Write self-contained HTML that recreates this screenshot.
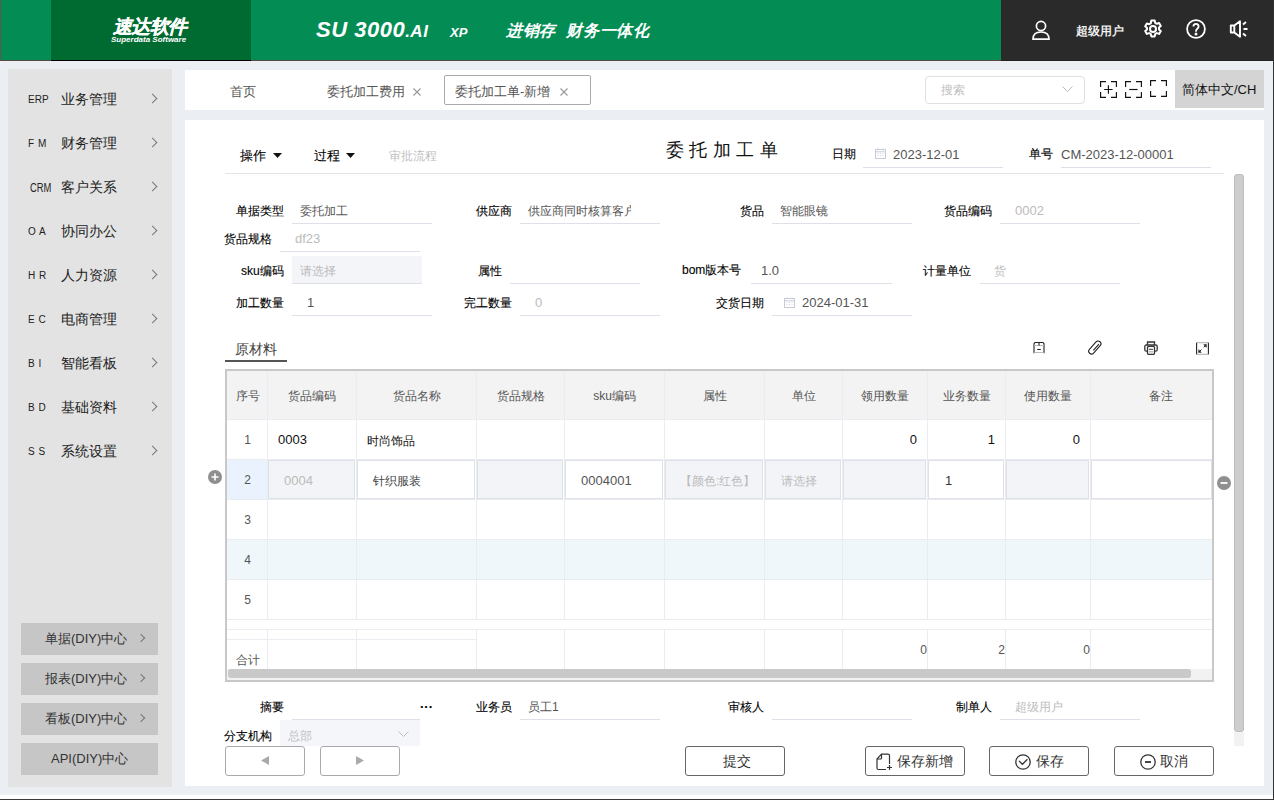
<!DOCTYPE html>
<html><head><meta charset="utf-8">
<style>
*{box-sizing:border-box;margin:0;padding:0}
html,body{width:1274px;height:800px;overflow:hidden}
body{position:relative;background:#ebeef2;font-family:"Liberation Sans",sans-serif;color:#333;font-size:12px}
.a{position:absolute;white-space:nowrap}
#hdr{position:absolute;left:0;top:0;width:1274px;height:61px;background:#038d55;border-bottom:1px solid #5a4848}
#logo{position:absolute;left:51px;top:0;width:200px;height:61px;background:#006b31;border-bottom:1px solid #000}
#hdr-r{position:absolute;left:1001px;top:0;width:273px;height:61px;background:#2a2a2a;border-bottom:1px solid #222}
#side{position:absolute;left:8px;top:69px;width:164px;height:718px;background:#e3e3e3}
.mi{position:absolute;left:0;width:164px;height:44px}
.mi .ab{position:absolute;left:20px;top:0;font-size:10px;color:#222;letter-spacing:1px}
.mi .nm{position:absolute;left:53px;top:1px;font-size:14px;color:#222}
.chev{position:absolute;width:7px;height:7px;border-right:1px solid #777;border-top:1px solid #777;transform:rotate(45deg)}
.sb{position:absolute;left:13px;width:137px;height:32px;background:#c6c6c6;font-size:13px;color:#333}
#tabs{position:absolute;left:185px;top:70px;width:1079px;height:40px;background:#fff}
#panel{position:absolute;left:185px;top:120px;width:1079px;height:666px;background:#fff}
</style></head><body>
<div id="hdr">
  <div id="logo">
    <div class="a" style="left:62px;top:17px;font-size:19px;line-height:1;font-weight:bold;font-style:italic;color:#fff;letter-spacing:-0.6px;-webkit-text-stroke:0.2px #fff">速达软件</div>
    <div class="a" style="left:60px;top:35px;font-size:8px;font-weight:bold;font-style:italic;color:#fff;letter-spacing:0px">Superdata Software</div>
  </div>
  <div class="a" style="left:316px;top:17px;font-size:22px;font-weight:bold;font-style:italic;color:#fff;letter-spacing:0.5px">SU 3000<span style="font-size:17px">.AI</span></div>
  <div class="a" style="left:450px;top:25px;font-size:13px;font-weight:bold;font-style:italic;color:#fff">XP</div>
  <div class="a" style="left:506px;top:21px;font-size:16px;font-weight:bold;font-style:italic;color:#fff;letter-spacing:0.6px">进销存</div>
  <div class="a" style="left:566px;top:21px;font-size:16px;font-weight:bold;font-style:italic;color:#fff;letter-spacing:0.8px">财务一体化</div>
  <div id="hdr-r">
    <svg class="a" style="left:31px;top:20px" width="18" height="20" viewBox="0 0 18 20" fill="none" stroke="#fff" stroke-width="1.7"><circle cx="9" cy="6" r="4.6"/><path d="M1 19.2 C1 14 4.5 12 9 12 C13.5 12 17 14 17 19.2 Z"/></svg>
    <div class="a" style="left:75px;top:23px;font-size:12px;color:#fff;-webkit-text-stroke:0.3px #fff">超级用户</div>
    <svg class="a" style="left:142px;top:19px" width="20" height="20" viewBox="0 0 20 20" fill="none" stroke="#fff" stroke-width="2"><path d="M8.3 1.5h3.4l.5 2.4 1.6.9 2.3-.8 1.7 2.9-1.8 1.6v1.9l1.8 1.6-1.7 2.9-2.3-.8-1.6.9-.5 2.4H8.3l-.5-2.4-1.6-.9-2.3.8-1.7-2.9 1.8-1.6V8.9L2.2 7.3l1.7-2.9 2.3.8 1.6-.9z" stroke-linejoin="round"/><circle cx="10" cy="10" r="3"/></svg>
    <svg class="a" style="left:185px;top:19px" width="20" height="20" viewBox="0 0 20 20" fill="none" stroke="#fff" stroke-width="1.8"><circle cx="10" cy="10" r="8.9"/><path d="M7.4 7.6C7.4 5.9 8.5 4.9 10 4.9s2.6 1 2.6 2.6c0 2.2-2.6 2.3-2.6 4.5v.7"/><circle cx="10" cy="15" r=".6" fill="#fff"/></svg>
    <svg class="a" style="left:228px;top:20px" width="20" height="18" viewBox="0 0 20 18" fill="none" stroke="#fff" stroke-width="1.9"><path d="M1.8 5.5h3.5L11 1.2v15.6L5.3 12.5H1.8z" stroke-linejoin="round"/><path d="M5.3 5.5v7"/><path d="M14 4.5l3-2.5M14.5 9h4M14 13.5l3 2.5"/></svg>
  </div>
</div>
<div id="side">
  <div class="mi" style="top:21px"><div class="ab" style="top:4px;letter-spacing:0">ERP</div><div class="nm">业务管理</div><div class="chev" style="left:141px;top:5px"></div></div>
  <div class="mi" style="top:65px"><div class="ab" style="top:4px;letter-spacing:0.5px">F M</div><div class="nm">财务管理</div><div class="chev" style="left:141px;top:5px"></div></div>
  <div class="mi" style="top:109px"><div class="ab" style="top:4px;letter-spacing:0;font-size:12px;left:22px;top:3px;transform:scaleX(0.78);transform-origin:0 0">CRM</div><div class="nm">客户关系</div><div class="chev" style="left:141px;top:5px"></div></div>
  <div class="mi" style="top:153px"><div class="ab" style="top:4px;letter-spacing:0.5px">O A</div><div class="nm">协同办公</div><div class="chev" style="left:141px;top:5px"></div></div>
  <div class="mi" style="top:197px"><div class="ab" style="top:4px;letter-spacing:0.5px">H R</div><div class="nm">人力资源</div><div class="chev" style="left:141px;top:5px"></div></div>
  <div class="mi" style="top:241px"><div class="ab" style="top:4px;letter-spacing:0.5px">E C</div><div class="nm">电商管理</div><div class="chev" style="left:141px;top:5px"></div></div>
  <div class="mi" style="top:285px"><div class="ab" style="top:4px;letter-spacing:0.5px">B I</div><div class="nm">智能看板</div><div class="chev" style="left:141px;top:5px"></div></div>
  <div class="mi" style="top:329px"><div class="ab" style="top:4px;letter-spacing:0.5px">B D</div><div class="nm">基础资料</div><div class="chev" style="left:141px;top:5px"></div></div>
  <div class="mi" style="top:373px"><div class="ab" style="top:4px;letter-spacing:0.5px">S S</div><div class="nm">系统设置</div><div class="chev" style="left:141px;top:5px"></div></div>
  <div class="sb" style="top:554px"><div class="a" style="left:24px;top:7px">单据(DIY)中心</div><div class="chev" style="left:117px;top:12px;width:6px;height:6px"></div></div>
  <div class="sb" style="top:594px"><div class="a" style="left:24px;top:7px">报表(DIY)中心</div><div class="chev" style="left:117px;top:12px;width:6px;height:6px"></div></div>
  <div class="sb" style="top:634px"><div class="a" style="left:24px;top:7px">看板(DIY)中心</div><div class="chev" style="left:117px;top:12px;width:6px;height:6px"></div></div>
  <div class="sb" style="top:674px"><div class="a" style="left:30px;top:7px">API(DIY)中心</div></div>
</div>
<div id="tabs"></div>
<div class="a" style="left:230px;top:85px;font-size:13px;line-height:1;color:#555;">首页</div>
<div class="a" style="left:327px;top:85px;font-size:13px;line-height:1;color:#555;">委托加工费用</div>
<svg class="a" style="left:413px;top:88px" width="8" height="8" viewBox="0 0 8 8" stroke="#999" stroke-width="1.1"><path d="M.5 .5l7 7M7.5 .5l-7 7"/></svg>
<div class="a" style="left:444px;top:75px;width:147px;height:30px;background:#fff;border:1px solid #aaa;border-radius:2px"></div>
<div class="a" style="left:455px;top:85px;font-size:13px;line-height:1;color:#555;">委托加工单-新增</div>
<svg class="a" style="left:560px;top:88px" width="8" height="8" viewBox="0 0 8 8" stroke="#999" stroke-width="1.1"><path d="M.5 .5l7 7M7.5 .5l-7 7"/></svg>
<div class="a" style="left:925px;top:76px;width:160px;height:28px;background:#fff;border:1px solid #e0e0e0;border-radius:4px"></div>
<div class="a" style="left:941px;top:84px;font-size:12px;line-height:1;color:#c0c0c0;">搜索</div>
<svg class="a" style="left:1062px;top:86px" width="11" height="7" viewBox="0 0 11 7" fill="none" stroke="#bbb" stroke-width="1"><path d="M.5 .5l5 5 5-5"/></svg>
<svg class="a" style="left:1100px;top:81px" width="17" height="17" viewBox="0 0 17 17" fill="none" stroke="#111" stroke-width="1.15"><path d="M6 .6H.6V6M11 .6h5.4V6M.6 11v5.4H6M16.4 11v5.4H11"/><path d="M4.2 8.5h8.4M8.4 4.3v8.4"/></svg>
<svg class="a" style="left:1125px;top:81px" width="17" height="17" viewBox="0 0 17 17" fill="none" stroke="#111" stroke-width="1.15"><path d="M6 .6H.6V6M11 .6h5.4V6M.6 11v5.4H6M16.4 11v5.4H11"/><path d="M4.2 8.5h8.4"/></svg>
<svg class="a" style="left:1150px;top:80px" width="17" height="17" viewBox="0 0 17 17" fill="none" stroke="#111" stroke-width="1.15"><path d="M6 .6H.6V6M11 .6h5.4V6M.6 11v5.4H6M16.4 11v5.4H11"/></svg>
<div class="a" style="left:1175px;top:70px;width:89px;height:38px;background:#d4d4d4;"></div>
<div class="a" style="left:1182px;top:83px;font-size:13px;line-height:1;color:#111;">简体中文/CH</div>
<div id="panel"></div>
<div class="a" style="left:240px;top:150px;font-size:12.5px;line-height:1;color:#000;-webkit-text-stroke:0.1px #000;">操作</div>
<svg class="a" style="left:273px;top:153px" width="9" height="5" viewBox="0 0 9 5"><path d="M0 0h9L4.5 5z" fill="#111"/></svg>
<div class="a" style="left:314px;top:150px;font-size:12.5px;line-height:1;color:#000;-webkit-text-stroke:0.1px #000;">过程</div>
<svg class="a" style="left:346px;top:153px" width="9" height="5" viewBox="0 0 9 5"><path d="M0 0h9L4.5 5z" fill="#111"/></svg>
<div class="a" style="left:389px;top:150px;font-size:12px;line-height:1;color:#c0c0c0;">审批流程</div>
<div class="a" style="left:225px;top:173px;width:999px;height:1px;background:#e4e4e4;"></div>
<div class="a" style="left:666px;top:141px;font-size:18px;line-height:1;color:#111;letter-spacing:5.4px">委托加工单</div>
<div class="a" style="left:832px;top:148px;font-size:12px;line-height:1;color:#000;-webkit-text-stroke:0.1px #000;">日期</div>
<div class="a" style="left:875px;top:148px"><svg width="11" height="11" viewBox="0 0 11 11" fill="none" stroke="#c9ccd6" stroke-width="1"><rect x=".5" y="1.5" width="10" height="9"/><path d="M.5 3.8h10M3 .3v2M8 .3v2"/><path d="M2.5 5.5h1M5 5.5h1M7.5 5.5h1M2.5 7.5h1M5 7.5h1M7.5 7.5h1" stroke-width=".8"/></svg></div>
<div class="a" style="left:893px;top:148px;font-size:13px;line-height:1;color:#555;">2023-12-01</div>
<div class="a" style="left:863px;top:167px;width:140px;height:1px;background:#dde0e8;"></div>
<div class="a" style="left:1029px;top:148px;font-size:12px;line-height:1;color:#000;-webkit-text-stroke:0.1px #000;">单号</div>
<div class="a" style="left:1061px;top:148px;font-size:13px;line-height:1;color:#555;">CM-2023-12-00001</div>
<div class="a" style="left:1061px;top:167px;width:150px;height:1px;background:#dde0e8;"></div>
<div class="a" style="left:236px;top:205px;font-size:12px;line-height:1;color:#000;-webkit-text-stroke:0.1px #000;">单据类型</div>
<div class="a" style="left:300px;top:205px;font-size:12px;line-height:1;color:#555;">委托加工</div>
<div class="a" style="left:292px;top:223px;width:140px;height:1px;background:#dde0e8;"></div>
<div class="a" style="left:476px;top:205px;font-size:12px;line-height:1;color:#000;-webkit-text-stroke:0.1px #000;">供应商</div>
<div class="a" style="left:528px;top:205px;width:103px;overflow:hidden;font-size:12px;line-height:1;color:#555">供应商同时核算客户</div>
<div class="a" style="left:520px;top:223px;width:140px;height:1px;background:#dde0e8;"></div>
<div class="a" style="left:740px;top:205px;font-size:12px;line-height:1;color:#000;-webkit-text-stroke:0.1px #000;">货品</div>
<div class="a" style="left:780px;top:205px;font-size:12px;line-height:1;color:#555;">智能眼镜</div>
<div class="a" style="left:772px;top:223px;width:140px;height:1px;background:#dde0e8;"></div>
<div class="a" style="left:944px;top:205px;font-size:12px;line-height:1;color:#000;-webkit-text-stroke:0.1px #000;">货品编码</div>
<div class="a" style="left:1015px;top:204px;font-size:13px;line-height:1;color:#bbb;">0002</div>
<div class="a" style="left:1000px;top:223px;width:140px;height:1px;background:#dde0e8;"></div>
<div class="a" style="left:224px;top:233px;font-size:12px;line-height:1;color:#000;-webkit-text-stroke:0.1px #000;">货品规格</div>
<div class="a" style="left:295px;top:232px;font-size:13px;line-height:1;color:#bbb;">df23</div>
<div class="a" style="left:280px;top:251px;width:140px;height:1px;background:#dde0e8;"></div>
<div class="a" style="left:241px;top:265px;font-size:12px;line-height:1;color:#000;-webkit-text-stroke:0.1px #000;">sku编码</div>
<div class="a" style="left:292px;top:256px;width:130px;height:27px;background:#f3f5f9;"></div>
<div class="a" style="left:300px;top:265px;font-size:12px;line-height:1;color:#bbb;">请选择</div>
<div class="a" style="left:292px;top:283px;width:130px;height:1px;background:#dde0e8;"></div>
<div class="a" style="left:478px;top:265px;font-size:12px;line-height:1;color:#000;-webkit-text-stroke:0.1px #000;">属性</div>
<div class="a" style="left:510px;top:283px;width:130px;height:1px;background:#dde0e8;"></div>
<div class="a" style="left:682px;top:264px;font-size:12px;line-height:1;color:#000;-webkit-text-stroke:0.1px #000;">bom版本号</div>
<div class="a" style="left:761px;top:264px;font-size:13px;line-height:1;color:#555;">1.0</div>
<div class="a" style="left:751px;top:283px;width:141px;height:1px;background:#dde0e8;"></div>
<div class="a" style="left:923px;top:265px;font-size:12px;line-height:1;color:#000;-webkit-text-stroke:0.1px #000;">计量单位</div>
<div class="a" style="left:994px;top:265px;font-size:12px;line-height:1;color:#bbb;">货</div>
<div class="a" style="left:980px;top:283px;width:140px;height:1px;background:#dde0e8;"></div>
<div class="a" style="left:236px;top:297px;font-size:12px;line-height:1;color:#000;-webkit-text-stroke:0.1px #000;">加工数量</div>
<div class="a" style="left:307px;top:296px;font-size:13px;line-height:1;color:#555;">1</div>
<div class="a" style="left:292px;top:315px;width:140px;height:1px;background:#dde0e8;"></div>
<div class="a" style="left:464px;top:297px;font-size:12px;line-height:1;color:#000;-webkit-text-stroke:0.1px #000;">完工数量</div>
<div class="a" style="left:535px;top:296px;font-size:13px;line-height:1;color:#bbb;">0</div>
<div class="a" style="left:520px;top:315px;width:140px;height:1px;background:#dde0e8;"></div>
<div class="a" style="left:716px;top:297px;font-size:12px;line-height:1;color:#000;-webkit-text-stroke:0.1px #000;">交货日期</div>
<div class="a" style="left:784px;top:297px"><svg width="11" height="11" viewBox="0 0 11 11" fill="none" stroke="#c9ccd6" stroke-width="1"><rect x=".5" y="1.5" width="10" height="9"/><path d="M.5 3.8h10M3 .3v2M8 .3v2"/><path d="M2.5 5.5h1M5 5.5h1M7.5 5.5h1M2.5 7.5h1M5 7.5h1M7.5 7.5h1" stroke-width=".8"/></svg></div>
<div class="a" style="left:802px;top:296px;font-size:13px;line-height:1;color:#555;">2024-01-31</div>
<div class="a" style="left:772px;top:315px;width:140px;height:1px;background:#dde0e8;"></div>
<div class="a" style="left:235px;top:342px;font-size:14px;line-height:1;color:#444;">原材料</div>
<div class="a" style="left:225px;top:360px;width:62px;height:2px;background:#555;"></div>
<svg class="a" style="left:1032px;top:341px" width="14" height="14" viewBox="0 0 14 14" fill="none" stroke="#222" stroke-width="1.1"><path d="M2 12.3V2.8L3 1.5h8l1 1.3v9.5"/><path d="M2.3 4.5h9.4M2.3 11.5h9.4" stroke="#bbb"/><path d="M7 1.5v3M5.2 8.5h3.6"/></svg>
<svg class="a" style="left:1087px;top:338px" width="16" height="19" viewBox="0 0 16 19" fill="none" stroke="#222" stroke-width="1.1"><g transform="rotate(42 7.8 9.5)"><rect x="5" y="1.8" width="5.6" height="15.4" rx="2.8"/><path d="M8.6 4.2v8.4"/></g></svg>
<svg class="a" style="left:1144px;top:341px" width="14" height="14" viewBox="0 0 14 14" fill="none" stroke="#333" stroke-width="1.3"><path d="M3.5 4V1h7v3"/><rect x=".8" y="4" width="12.4" height="6.2" rx="1.5"/><rect x="3.5" y="5.4" width="7" height="7.9" rx="1" fill="#fff"/><path d="M5 8.3h4" stroke-width="1"/><path d="M5 10.8h4" stroke="#aaa" stroke-width="1.2"/></svg>
<svg class="a" style="left:1196px;top:342px" width="13" height="13" viewBox="0 0 13 13" fill="none" stroke="#222" stroke-width="1.1"><path d="M.6 .5v12M12.4 .5v12"/><path d="M.6 .6h11.8M.6 12.4h11.8" stroke="#bbb"/><path d="M2.8 10.2l2.6-2.6M7.6 5.4l2.6-2.6" stroke-width="1"/><path d="M7.6 2.6h2.8v2.8z M2.6 7.6v2.8h2.8z" fill="#222" stroke-width=".4"/></svg>
<div class="a" style="left:225px;top:369px;width:989px;height:313px;background:#fff;border:2px solid #c8c8c8"></div>
<div class="a" style="left:227px;top:371px;width:985px;height:48px;background:#f3f3f3;"></div>
<div class="a" style="left:227px;top:539px;width:985px;height:40px;background:#eff7fb;"></div>
<div class="a" style="left:227px;top:459px;width:40px;height:40px;background:#eaf3fd;"></div>
<div class="a" style="left:227px;top:419px;width:985px;height:1px;background:#ebecf2;"></div>
<div class="a" style="left:227px;top:459px;width:985px;height:1px;background:#ebecf2;"></div>
<div class="a" style="left:227px;top:499px;width:985px;height:1px;background:#ebecf2;"></div>
<div class="a" style="left:227px;top:539px;width:985px;height:1px;background:#ebecf2;"></div>
<div class="a" style="left:227px;top:579px;width:985px;height:1px;background:#ebecf2;"></div>
<div class="a" style="left:227px;top:619px;width:985px;height:1px;background:#ebecf2;"></div>
<div class="a" style="left:227px;top:629px;width:985px;height:1px;background:#ebecf2;"></div>
<div class="a" style="left:227px;top:639px;width:249px;height:1px;background:#ebecf2;"></div>
<div class="a" style="left:267px;top:371px;width:1px;height:248px;background:#ebecf2;"></div>
<div class="a" style="left:267px;top:629px;width:1px;height:40px;background:#ebecf2;"></div>
<div class="a" style="left:356px;top:371px;width:1px;height:248px;background:#ebecf2;"></div>
<div class="a" style="left:356px;top:629px;width:1px;height:40px;background:#ebecf2;"></div>
<div class="a" style="left:476px;top:371px;width:1px;height:248px;background:#ebecf2;"></div>
<div class="a" style="left:476px;top:629px;width:1px;height:40px;background:#ebecf2;"></div>
<div class="a" style="left:564px;top:371px;width:1px;height:248px;background:#ebecf2;"></div>
<div class="a" style="left:564px;top:629px;width:1px;height:40px;background:#ebecf2;"></div>
<div class="a" style="left:664px;top:371px;width:1px;height:248px;background:#ebecf2;"></div>
<div class="a" style="left:664px;top:629px;width:1px;height:40px;background:#ebecf2;"></div>
<div class="a" style="left:764px;top:371px;width:1px;height:248px;background:#ebecf2;"></div>
<div class="a" style="left:764px;top:629px;width:1px;height:40px;background:#ebecf2;"></div>
<div class="a" style="left:842px;top:371px;width:1px;height:248px;background:#ebecf2;"></div>
<div class="a" style="left:842px;top:629px;width:1px;height:40px;background:#ebecf2;"></div>
<div class="a" style="left:927px;top:371px;width:1px;height:248px;background:#ebecf2;"></div>
<div class="a" style="left:927px;top:629px;width:1px;height:40px;background:#ebecf2;"></div>
<div class="a" style="left:1005px;top:371px;width:1px;height:248px;background:#ebecf2;"></div>
<div class="a" style="left:1005px;top:629px;width:1px;height:40px;background:#ebecf2;"></div>
<div class="a" style="left:1090px;top:371px;width:1px;height:248px;background:#ebecf2;"></div>
<div class="a" style="left:1090px;top:629px;width:1px;height:40px;background:#ebecf2;"></div>
<div class="a" style="left:147.5px;top:390px;width:200px;text-align:center;font-size:12px;line-height:1;color:#555;">序号</div>
<div class="a" style="left:212.0px;top:390px;width:200px;text-align:center;font-size:12px;line-height:1;color:#555;">货品编码</div>
<div class="a" style="left:316.5px;top:390px;width:200px;text-align:center;font-size:12px;line-height:1;color:#555;">货品名称</div>
<div class="a" style="left:420.5px;top:390px;width:200px;text-align:center;font-size:12px;line-height:1;color:#555;">货品规格</div>
<div class="a" style="left:514.5px;top:390px;width:200px;text-align:center;font-size:12px;line-height:1;color:#555;">sku编码</div>
<div class="a" style="left:614.5px;top:390px;width:200px;text-align:center;font-size:12px;line-height:1;color:#555;">属性</div>
<div class="a" style="left:703.5px;top:390px;width:200px;text-align:center;font-size:12px;line-height:1;color:#555;">单位</div>
<div class="a" style="left:785.0px;top:390px;width:200px;text-align:center;font-size:12px;line-height:1;color:#555;">领用数量</div>
<div class="a" style="left:866.5px;top:390px;width:200px;text-align:center;font-size:12px;line-height:1;color:#555;">业务数量</div>
<div class="a" style="left:948.0px;top:390px;width:200px;text-align:center;font-size:12px;line-height:1;color:#555;">使用数量</div>
<div class="a" style="left:1060.5px;top:390px;width:200px;text-align:center;font-size:12px;line-height:1;color:#555;">备注</div>
<div class="a" style="left:147.5px;top:434px;width:200px;text-align:center;font-size:12px;line-height:1;color:#555;">1</div>
<div class="a" style="left:278px;top:433px;font-size:13px;line-height:1;color:#111;">0003</div>
<div class="a" style="left:367px;top:435px;font-size:12px;line-height:1;color:#111;">时尚饰品</div>
<div class="a" style="left:717px;top:433px;width:200px;text-align:right;font-size:13px;line-height:1;color:#111;">0</div>
<div class="a" style="left:795px;top:433px;width:200px;text-align:right;font-size:13px;line-height:1;color:#111;">1</div>
<div class="a" style="left:880px;top:433px;width:200px;text-align:right;font-size:13px;line-height:1;color:#111;">0</div>
<div class="a" style="left:268px;top:460px;width:87px;height:39px;background:#f3f4f8;border:1px solid #dfe1e8"></div>
<div class="a" style="left:284px;top:474px;font-size:13px;line-height:1;color:#bbb;">0004</div>
<div class="a" style="left:357px;top:460px;width:118px;height:39px;background:#fff;border:1px solid #dfe1e8"></div>
<div class="a" style="left:373px;top:475px;font-size:12px;line-height:1;color:#444;">针织服装</div>
<div class="a" style="left:477px;top:460px;width:86px;height:39px;background:#f3f4f8;border:1px solid #dfe1e8"></div>
<div class="a" style="left:565px;top:460px;width:98px;height:39px;background:#fff;border:1px solid #dfe1e8"></div>
<div class="a" style="left:581px;top:474px;font-size:13px;line-height:1;color:#555;">0004001</div>
<div class="a" style="left:665px;top:460px;width:98px;height:39px;background:#f3f4f8;border:1px solid #dfe1e8"></div>
<div class="a" style="left:680px;top:475px;font-size:12px;line-height:1;color:#bbb;">【颜色:红色】</div>
<div class="a" style="left:765px;top:460px;width:76px;height:39px;background:#f3f4f8;border:1px solid #dfe1e8"></div>
<div class="a" style="left:781px;top:475px;font-size:12px;line-height:1;color:#bbb;">请选择</div>
<div class="a" style="left:843px;top:460px;width:83px;height:39px;background:#f3f4f8;border:1px solid #dfe1e8"></div>
<div class="a" style="left:928px;top:460px;width:76px;height:39px;background:#fff;border:1px solid #dfe1e8"></div>
<div class="a" style="left:945px;top:474px;font-size:13px;line-height:1;color:#333;">1</div>
<div class="a" style="left:1006px;top:460px;width:83px;height:39px;background:#f3f4f8;border:1px solid #dfe1e8"></div>
<div class="a" style="left:1091px;top:460px;width:121px;height:39px;background:#fff;border:1px solid #dfe1e8"></div>
<div class="a" style="left:147.5px;top:474px;width:200px;text-align:center;font-size:12px;line-height:1;color:#555;">2</div>
<div class="a" style="left:147.5px;top:514px;width:200px;text-align:center;font-size:12px;line-height:1;color:#555;">3</div>
<div class="a" style="left:147.5px;top:554px;width:200px;text-align:center;font-size:12px;line-height:1;color:#555;">4</div>
<div class="a" style="left:147.5px;top:594px;width:200px;text-align:center;font-size:12px;line-height:1;color:#555;">5</div>
<div class="a" style="left:236px;top:654px;font-size:12px;line-height:1;color:#555;">合计</div>
<div class="a" style="left:727px;top:644px;width:200px;text-align:right;font-size:12px;line-height:1;color:#555;">0</div>
<div class="a" style="left:805px;top:644px;width:200px;text-align:right;font-size:12px;line-height:1;color:#555;">2</div>
<div class="a" style="left:890px;top:644px;width:200px;text-align:right;font-size:12px;line-height:1;color:#555;">0</div>
<div class="a" style="left:227px;top:669px;width:985px;height:11px;background:#f2f2f2;"></div>
<div class="a" style="left:228px;top:669px;width:963px;height:9px;background:#c9c9c9;border-radius:3px"></div>
<svg class="a" style="left:208px;top:470px" width="14" height="14" viewBox="0 0 14 14"><circle cx="7" cy="7" r="7" fill="#8f8f8f"/><path d="M3.5 7h7M7 3.5v7" stroke="#fff" stroke-width="1.6"/></svg>
<svg class="a" style="left:1217px;top:476px" width="14" height="14" viewBox="0 0 14 14"><circle cx="7" cy="7" r="7" fill="#8f8f8f"/><path d="M3.5 7h7" stroke="#fff" stroke-width="1.8"/></svg>
<div class="a" style="left:260px;top:701px;font-size:12px;line-height:1;color:#000;-webkit-text-stroke:0.1px #000;">摘要</div>
<div class="a" style="left:420px;top:700px;font-size:13px;line-height:1;color:#000;-webkit-text-stroke:0.1px #000;font-weight:bold">···</div>
<div class="a" style="left:292px;top:719px;width:128px;height:1px;background:#dde0e8;"></div>
<div class="a" style="left:476px;top:701px;font-size:12px;line-height:1;color:#000;-webkit-text-stroke:0.1px #000;">业务员</div>
<div class="a" style="left:528px;top:701px;font-size:12px;line-height:1;color:#555;">员工1</div>
<div class="a" style="left:520px;top:719px;width:140px;height:1px;background:#dde0e8;"></div>
<div class="a" style="left:728px;top:701px;font-size:12px;line-height:1;color:#000;-webkit-text-stroke:0.1px #000;">审核人</div>
<div class="a" style="left:772px;top:719px;width:140px;height:1px;background:#dde0e8;"></div>
<div class="a" style="left:956px;top:701px;font-size:12px;line-height:1;color:#000;-webkit-text-stroke:0.1px #000;">制单人</div>
<div class="a" style="left:1015px;top:701px;font-size:12px;line-height:1;color:#bbb;">超级用户</div>
<div class="a" style="left:1000px;top:719px;width:140px;height:1px;background:#dde0e8;"></div>
<div class="a" style="left:224px;top:730px;font-size:12px;line-height:1;color:#000;-webkit-text-stroke:0.1px #000;">分支机构</div>
<div class="a" style="left:280px;top:720px;width:140px;height:26px;background:#f4f6fa;"></div>
<div class="a" style="left:288px;top:730px;font-size:12px;line-height:1;color:#c0c0c0;">总部</div>
<svg class="a" style="left:398px;top:731px" width="11" height="7" viewBox="0 0 11 7" fill="none" stroke="#c0c0c0" stroke-width="1"><path d="M.5 .5l5 5 5-5"/></svg>
<div class="a" style="left:225px;top:746px;width:80px;height:30px;background:#fff;border:1px solid #aaa;border-radius:3px"></div>
<svg class="a" style="left:261px;top:756px" width="9" height="9" viewBox="0 0 9 9"><path d="M8 0v9L0 4.5z" fill="#aaa"/></svg>
<div class="a" style="left:320px;top:746px;width:80px;height:30px;background:#fff;border:1px solid #aaa;border-radius:3px"></div>
<svg class="a" style="left:355px;top:756px" width="9" height="9" viewBox="0 0 9 9"><path d="M1 0v9L9 4.5z" fill="#aaa"/></svg>
<div class="a" style="left:685px;top:746px;width:100px;height:30px;background:#fff;border:1px solid #666;border-radius:3px"></div>
<div class="a" style="left:723px;top:754px;font-size:14px;line-height:1;color:#333;">提交</div>
<div class="a" style="left:865px;top:746px;width:100px;height:30px;background:#fff;border:1px solid #666;border-radius:3px"></div>
<svg class="a" style="left:876px;top:753px" width="17" height="18" viewBox="0 0 17 18" fill="none" stroke="#333" stroke-width="1.2"><path d="M10 16.5H2.5a1.5 1.5 0 0 1-1.5-1.5V6L5.5 1.2H12a1.5 1.5 0 0 1 1.5 1.5V11"/><path d="M1 6h3.5a1 1 0 0 0 1-1V1.2"/><path d="M11 14.5h5M13.5 12v5"/></svg>
<div class="a" style="left:897px;top:754px;font-size:14px;line-height:1;color:#333;">保存新增</div>
<div class="a" style="left:989px;top:746px;width:100px;height:30px;background:#fff;border:1px solid #666;border-radius:3px"></div>
<svg class="a" style="left:1015px;top:754px" width="16" height="16" viewBox="0 0 16 16" fill="none" stroke="#333" stroke-width="1.3"><circle cx="8" cy="8" r="7.2"/><path d="M4 6.9l3.4 3.4 5-5"/></svg>
<div class="a" style="left:1036px;top:754px;font-size:14px;line-height:1;color:#333;">保存</div>
<div class="a" style="left:1114px;top:746px;width:100px;height:30px;background:#fff;border:1px solid #666;border-radius:3px"></div>
<svg class="a" style="left:1140px;top:754px" width="16" height="16" viewBox="0 0 16 16" fill="none" stroke="#333" stroke-width="1.3"><circle cx="8" cy="8" r="7.2"/><path d="M5 8h6" stroke-width="1.8"/></svg>
<div class="a" style="left:1160px;top:754px;font-size:14px;line-height:1;color:#333;">取消</div>
<div class="a" style="left:1234px;top:732px;width:10px;height:14px;background:#f2f2f2;"></div>
<div class="a" style="left:1234px;top:174px;width:10px;height:558px;background:#cdcdcd;border-radius:3px;border:1px solid #bdbdbd"></div>
<div class="a" style="left:0px;top:795px;width:1274px;height:4px;background:#fdfdfe;"></div>
<div class="a" style="left:0px;top:799px;width:1274px;height:1px;background:#3a3a3a;"></div>
<div class="a" style="left:0px;top:0px;width:1px;height:61px;background:#5d5558;"></div>
<div class="a" style="left:172px;top:69px;width:2px;height:718px;background:#eeeeef;"></div>
<div class="a" style="left:1273px;top:0px;width:1px;height:800px;background:#333;"></div>
</body></html>
